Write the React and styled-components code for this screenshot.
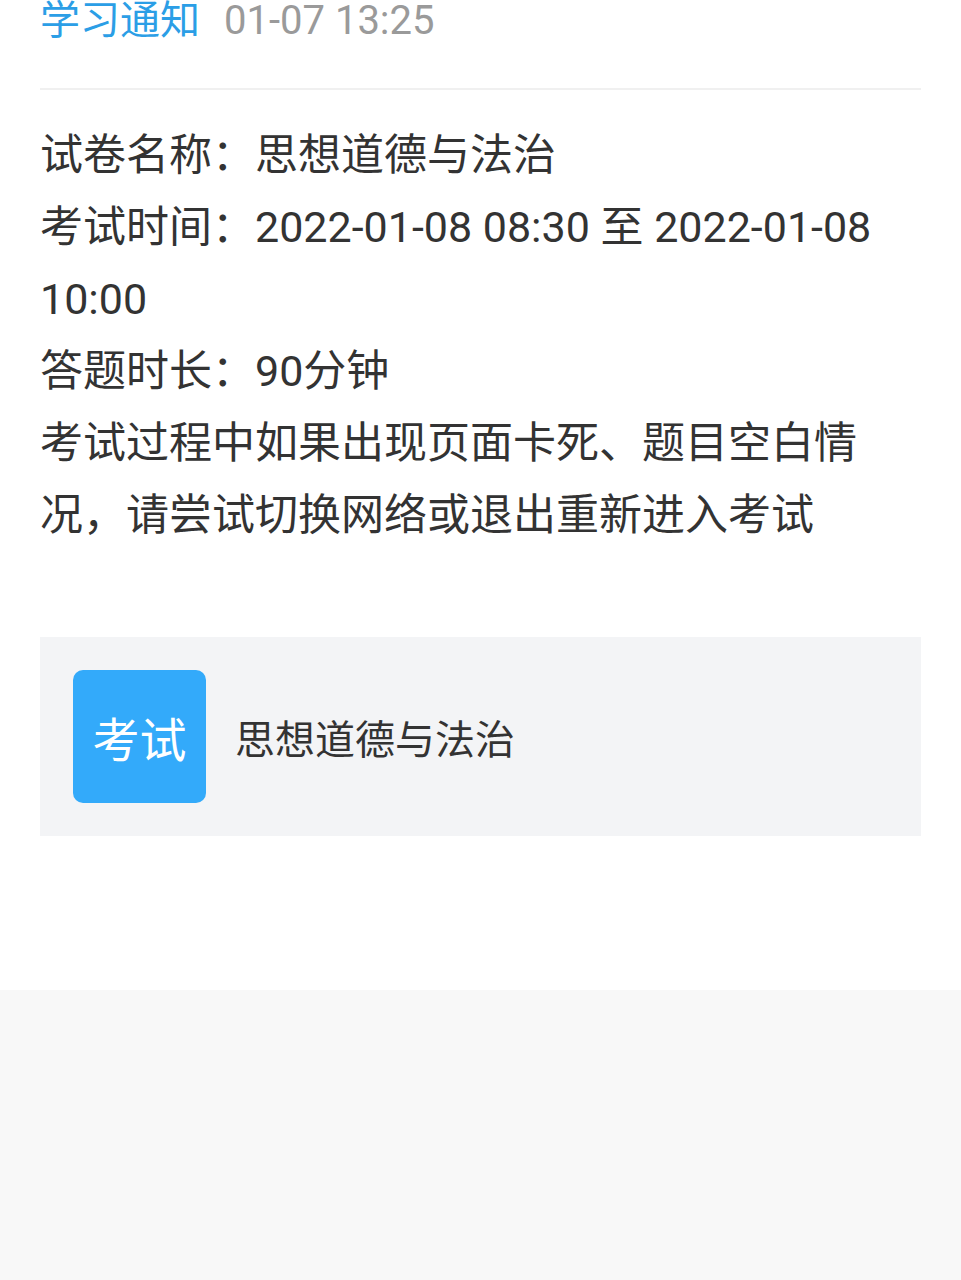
import styled, { createGlobalStyle } from 'styled-components';

const GlobalStyle = createGlobalStyle`
  html, body {
    margin: 0;
    padding: 0;
    background: #f8f8f8;
  }
  body {
    font-family: Roboto, "Noto Sans CJK SC", sans-serif;
  }
`;

const Page = styled.div`
  width: 961px;
  min-height: 1280px;
  background: #f8f8f8;
`;

const Sheet = styled.div`
  background: #fff;
  padding: 0 40px;
  height: 990px;
  box-sizing: border-box;
`;

const Header = styled.div`
  display: flex;
  align-items: center;
  gap: 24px;
  height: 42px;
  padding-bottom: 46px;
  border-bottom: 2px solid #f0f0f0;
`;

const Source = styled.span`
  font-size: 40px;
  color: #2b9ee6;
  line-height: 42px;
`;

const Time = styled.span`
  font-size: 40px;
  color: #9a9a9a;
  line-height: 42px;
`;

const Body = styled.div`
  padding-top: 29px;
  font-size: 43px;
  line-height: 72px;
  color: #333;
`;

const Line = styled.p`
  margin: 0;
`;

const Card = styled.div`
  margin-top: 86px;
  background: #f3f4f6;
  padding: 33px;
  display: flex;
  align-items: center;
  gap: 29px;
`;

const Badge = styled.div`
  width: 133px;
  height: 133px;
  border-radius: 10px;
  background: #33aafa;
  color: #fff;
  font-size: 47px;
  display: flex;
  align-items: center;
  justify-content: center;
`;

const CardTitle = styled.span`
  font-size: 40px;
  color: #333;
`;

export default function App() {
  return (
    <Page>
      <GlobalStyle />
      <Sheet>
        <Header>
          <Source>学习通知</Source>
          <Time>01-07 13:25</Time>
        </Header>
        <Body>
          <Line>试卷名称：思想道德与法治</Line>
          <Line>考试时间：2022-01-08 08:30 至 2022-01-08 10:00</Line>
          <Line>答题时长：90分钟</Line>
          <Line>考试过程中如果出现页面卡死、题目空白情况，请尝试切换网络或退出重新进入考试</Line>
        </Body>
        <Card>
          <Badge>考试</Badge>
          <CardTitle>思想道德与法治</CardTitle>
        </Card>
      </Sheet>
    </Page>
  );
}
